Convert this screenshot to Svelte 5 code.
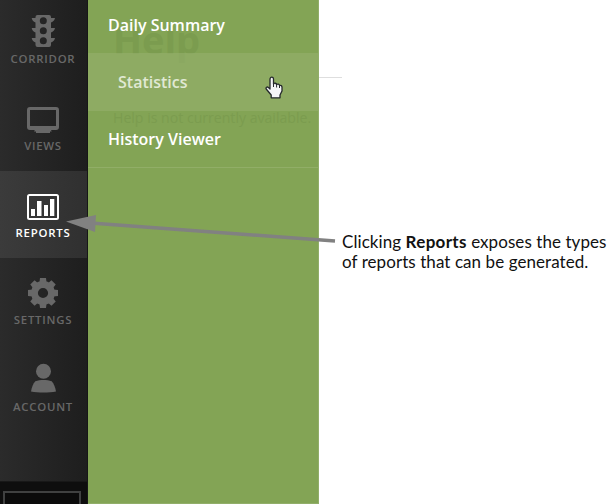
<script>
  const items = [
    { id: 'corridor', label: 'CORRIDOR' },
    { id: 'views', label: 'VIEWS' },
    { id: 'reports', label: 'REPORTS' },
    { id: 'settings', label: 'SETTINGS' },
    { id: 'account', label: 'ACCOUNT' }
  ];
  const active = 'reports';
  const teeth = [0, 45, 90, 135, 180, 225, 270, 315];
</script>

<div class="screen">
  <nav class="sidebar">
    {#each items as item}
      <div class="item" class:active={item.id === active}>
        <svg class="icon" width="40" height="36" viewBox="0 0 40 36" fill="currentColor">
          {#if item.id === 'corridor'}
            <path fill-rule="evenodd" d="M14.500 2H26a2 2 0 0 1 2 2v1h4c-.3 2.200-1.800 3.800-4 4.500V15h4c-.3 2.200-1.800 3.800-4 4.500V25h4c-.3 2.200-1.800 3.800-4 4.500V32a2 2 0 0 1-2 2H14.500a2 2 0 0 1-2-2v-2.500C10.300 28.800 9 27.200 8.700 25h3.800v-5.500C10.300 18.800 9 17.200 8.700 15h3.800V9.500C10.300 8.800 9 7.200 8.700 5h3.800V4a2 2 0 0 1 2-2ZM20.300 4.200a3.500 3.500 0 1 0 0 7 3.500 3.500 0 1 0 0-7Zm0 10a3.500 3.500 0 1 0 0 7 3.500 3.500 0 1 0 0-7Zm0 10a3.500 3.500 0 1 0 0 7 3.500 3.500 0 1 0 0-7Z" />
          {:else if item.id === 'views'}
            <path fill-rule="evenodd" d="M7 7h26a3 3 0 0 1 3 3v17a3 3 0 0 1-3 3h-5l.8 1.600h-1.800V33H13v-1.400h-2l.8-1.600H7a3 3 0 0 1-3-3V10a3 3 0 0 1 3-3Zm0 3v16h26V10Z" />
          {:else if item.id === 'reports'}
            <rect x="5" y="8" width="30" height="24" rx="1.500" fill="none" stroke="currentColor" stroke-width="2" />
            <path d="M8 22h4v7H8zM14 14h4.500v15H14zM21 18h4v11h-4zM27 12h4.300v17H27z" />
          {:else if item.id === 'settings'}
            <circle cx="20" cy="19" r="8.500" fill="none" stroke="currentColor" stroke-width="6.800" />
            {#each teeth as angle}
              <path d="M16.400 9 17 4h6l.6 5z" transform="rotate({angle} 20 19)" />
            {/each}
          {:else}
            <circle cx="20.500" cy="10.200" r="7.500" />
            <path d="M12.300 20.200c5-1.700 11.400-1.700 16.400 0 2.200 2 3.600 6.300 4.300 10.300-7 1.300-18 1.300-25 0 .7-4 2.100-8.300 4.300-10.300Z" />
          {/if}
        </svg>
        <span class="label">{item.label}</span>
      </div>
    {/each}
    <div class="footer"><div class="box"></div></div>
  </nav>

  <div class="menu">
    <div class="entry">Daily Summary</div>
    <div class="entry hover">Statistics</div>
    <div class="entry">History Viewer</div>
    <span class="ghost title">Help</span>
    <span class="ghost message">Help is not currently available.</span>
    <svg class="cursor" width="18" height="23" viewBox="0 0 18 23">
      <path d="M5 13V3.200C5 .4 8.500.4 8.500 3.200V8c1-1.300 2.800-.9 3.100.5 1.200-.9 2.700-.4 2.900 1 1.400-.6 2.500.3 2.500 1.800V15l-2 4v2.800H6.200V19L1.200 13c-.8-1.500 1-2.600 2.200-1.500Z" fill="#f5f5f7" stroke="#25292c" stroke-width="1.300" stroke-linejoin="round" />
      <path d="M8.500 7v4M11.600 8.500V11.500M14.500 9.500V12" stroke="#25292c" stroke-width="1" />
    </svg>
  </div>

  <main>
    <div class="rule"></div>
    <p>Clicking <b>Reports</b> exposes the types<br />of reports that can be generated.</p>
  </main>

  <svg class="arrow" width="607" height="504" viewBox="0 0 607 504">
    <path d="M94 223.300 335 241" stroke="#818181" stroke-width="3.600" />
    <path d="M66 221.500 96 215 95 232Z" fill="#818181" />
  </svg>
</div>

<style>
  :global(body) { margin: 0; background: #fff; }
  .screen {
    position: relative;
    display: flex;
    width: 607px;
    height: 504px;
    overflow: hidden;
    font-family: "Open Sans", "Noto Sans", sans-serif;
  }
  .sidebar {
    box-sizing: border-box;
    display: flex;
    flex: none;
    flex-direction: column;
    width: 88px;
    height: 504px;
    background: linear-gradient(90deg, #2b2b2b, #1e1e1e);
    border-right: 1px solid #171717;
  }
  .item {
    box-sizing: border-box;
    display: flex;
    flex: none;
    flex-direction: column;
    align-items: center;
    height: 87px;
    padding: 16px 0 0;
    color: #686868;
  }
  .item:first-child { margin-top: -3px; }
  .item.active {
    color: #fff;
    background: linear-gradient(90deg, #3b3b3b, #303030);
  }
  .icon { flex: none; margin-right: 1px; }
  .label {
    margin-top: 2px;
    padding-right: 1px;
    font-size: 11.4px;
    font-weight: 650;
    letter-spacing: 0.75px;
    line-height: 16px;
    white-space: nowrap;
  }
  .footer {
    box-sizing: border-box;
    height: 23px;
    margin-top: auto;
    padding: 9px 6px 0 3px;
    overflow: hidden;
    background: #0e0e0e;
    border-top: 1px solid #181818;
  }
  .box {
    height: 20px;
    background: #0b0b0b;
    border: 2px solid #404141;
  }
  .menu {
    position: relative;
    box-sizing: border-box;
    flex: none;
    width: 231px;
    height: 504px;
    background: #83a455;
    border-right: 1px solid #91ae69;
    border-bottom: 1px solid #91ae69;
  }
  .entry {
    position: relative;
    z-index: 1;
    box-sizing: border-box;
    height: 57px;
    padding-left: 20px;
    color: #fff;
    font-size: 16px;
    font-weight: 600;
    line-height: 57px;
    border-bottom: 1px solid #91ae67;
  }
  .entry:first-child { height: 53px; line-height: 50px; border-bottom: 0; }
  .entry.hover {
    height: 58px;
    padding-left: 30px;
    color: #e0e9d4;
    line-height: 59px;
    background: rgba(148, 176, 108, .62);
    border-bottom: 0;
  }
  .ghost { position: absolute; color: #7b9c4f; white-space: nowrap; }
  .title { left: 25px; top: 13px; font-size: 38px; font-weight: 700; line-height: 52px; }
  .message { left: 25px; top: 107px; font-size: 14.100px; line-height: 22px; }
  .cursor { position: absolute; z-index: 2; left: 177px; top: 76px; }
  main { flex: 1; min-width: 0; }
  .rule { width: 23px; height: 1px; margin-top: 77px; background: #dedede; }
  p {
    margin: 154px 0 0 23px;
    color: #111;
    font: 17px/20px Lato, sans-serif;
    letter-spacing: 0.070px;
    white-space: nowrap;
  }
  b { letter-spacing: 0.300px; }
  .arrow { position: absolute; z-index: 3; left: 0; top: 0; pointer-events: none; }
</style>
